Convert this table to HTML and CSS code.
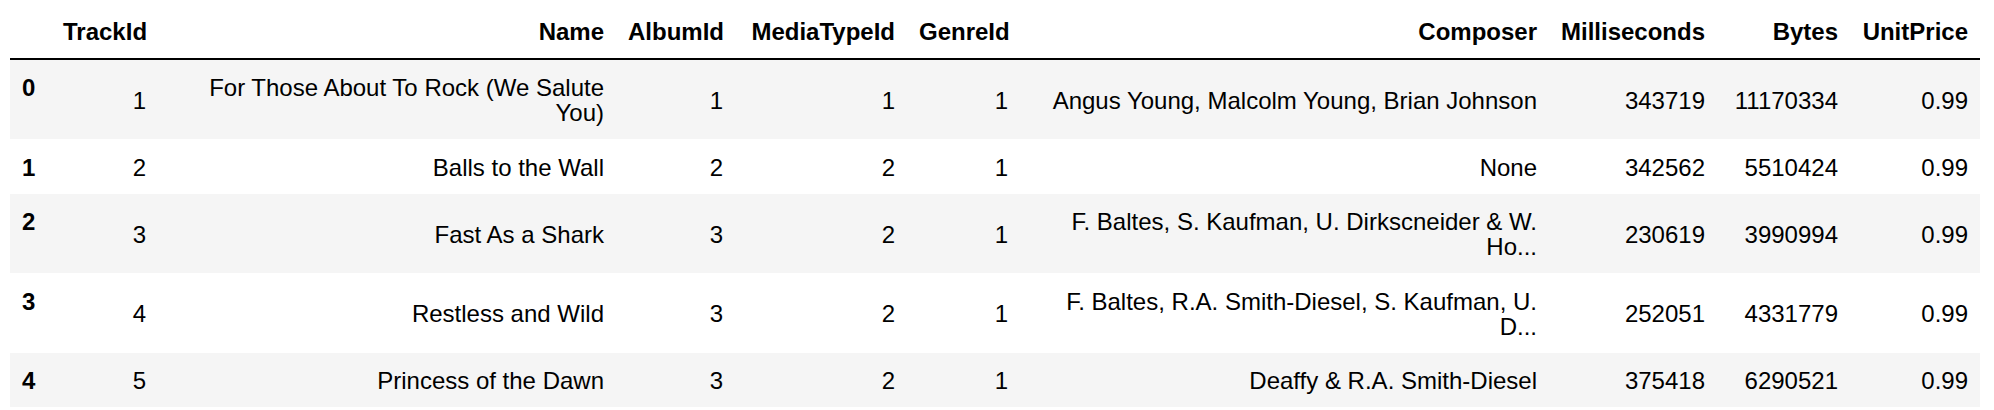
FILE: index.html
```html
<!DOCTYPE html>
<html>
<head>
<meta charset="utf-8">
<link rel="stylesheet" href="styles.css">
</head>
<body>
<div class="output">
<table class="dataframe">
  <colgroup>
    <col class="c-idx"><col class="c-track"><col class="c-name"><col class="c-album"><col class="c-media"><col class="c-genre"><col class="c-comp"><col class="c-ms"><col class="c-bytes"><col class="c-price">
  </colgroup>
  <thead>
    <tr>
      <th></th>
      <th>TrackId</th>
      <th>Name</th>
      <th>AlbumId</th>
      <th>MediaTypeId</th>
      <th>GenreId</th>
      <th>Composer</th>
      <th>Milliseconds</th>
      <th>Bytes</th>
      <th>UnitPrice</th>
    </tr>
  </thead>
  <tbody>
    <tr>
      <th>0</th>
      <td>1</td>
      <td>For Those About To Rock (We Salute You)</td>
      <td>1</td>
      <td>1</td>
      <td>1</td>
      <td>Angus Young, Malcolm Young, Brian Johnson</td>
      <td>343719</td>
      <td>11170334</td>
      <td>0.99</td>
    </tr>
    <tr>
      <th>1</th>
      <td>2</td>
      <td>Balls to the Wall</td>
      <td>2</td>
      <td>2</td>
      <td>1</td>
      <td>None</td>
      <td>342562</td>
      <td>5510424</td>
      <td>0.99</td>
    </tr>
    <tr>
      <th>2</th>
      <td>3</td>
      <td>Fast As a Shark</td>
      <td>3</td>
      <td>2</td>
      <td>1</td>
      <td>F. Baltes, S. Kaufman, U. Dirkscneider &amp; W. Ho...</td>
      <td>230619</td>
      <td>3990994</td>
      <td>0.99</td>
    </tr>
    <tr>
      <th>3</th>
      <td>4</td>
      <td>Restless and Wild</td>
      <td>3</td>
      <td>2</td>
      <td>1</td>
      <td>F. Baltes, R.A. Smith-Diesel, S. Kaufman, U. D...</td>
      <td>252051</td>
      <td>4331779</td>
      <td>0.99</td>
    </tr>
    <tr>
      <th>4</th>
      <td>5</td>
      <td>Princess of the Dawn</td>
      <td>3</td>
      <td>2</td>
      <td>1</td>
      <td>Deaffy &amp; R.A. Smith-Diesel</td>
      <td>375418</td>
      <td>6290521</td>
      <td>0.99</td>
    </tr>
  </tbody>
</table>
</div>
</body>
</html>
```

FILE: styles.css
```css
html, body {
  margin: 0;
  padding: 0;
  background: #ffffff;
}

.output {
  padding: 3px 0 0 10px;
}

.dataframe {
  font-family: "Liberation Sans", Arial, sans-serif;
  font-size: 24px;
  line-height: 25px;
  color: #000000;
  border-collapse: separate;
  border-spacing: 0;
  table-layout: fixed;
  width: 1970px;
}

.c-idx { width: 41px; }
.c-track { width: 107px; }
.c-name { width: 458px; }
.c-album { width: 119px; }
.c-media { width: 172px; }
.c-genre { width: 113px; }
.c-comp { width: 529px; }
.c-ms { width: 168px; }
.c-bytes { width: 133px; }
.c-price { width: 130px; }

.dataframe th,
.dataframe td {
  padding: 15.5px 12px 14px 12px;
  text-align: right;
  vertical-align: middle;
  white-space: normal;
}

.dataframe thead th {
  font-weight: bold;
  vertical-align: bottom;
  border-bottom: 2px solid #000000;
}

.dataframe tbody th {
  font-weight: bold;
  text-align: left;
  vertical-align: top;
}

.dataframe tbody td {
  font-weight: normal;
}

.dataframe tbody tr:nth-child(odd) {
  background: #f5f5f5;
}
```
